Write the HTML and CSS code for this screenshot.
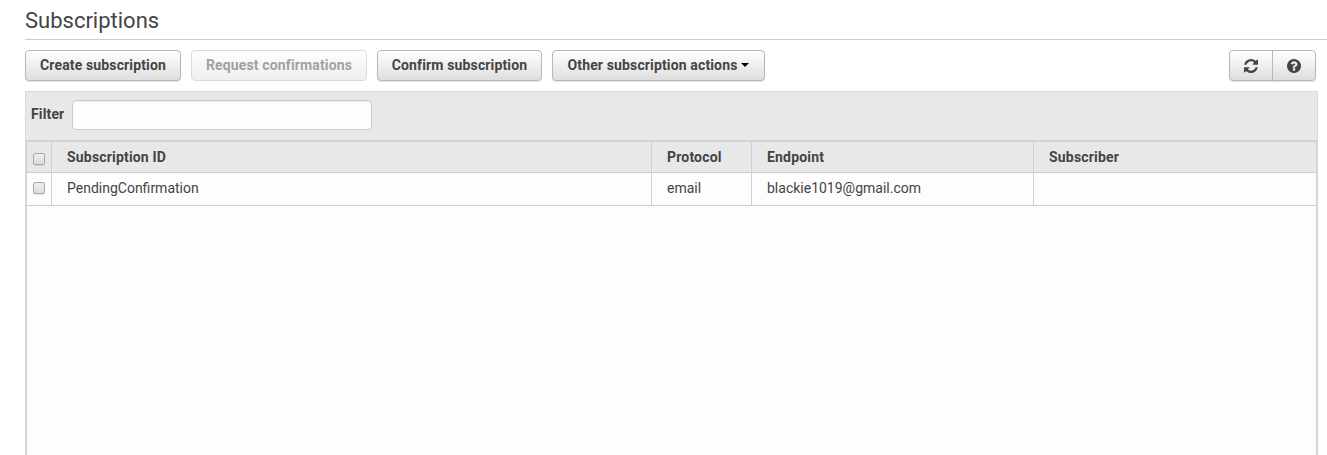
FILE: index.html
```
<!DOCTYPE html>
<html lang="en">
<head>
<meta charset="utf-8">
<title>Subscriptions</title>
<link rel="stylesheet" href="styles.css">
</head>
<body>
<main class="page">
  <h1 class="title"><span>Subscriptions</span></h1>
  <div class="toolbar">
    <button class="btn create">Create subscription</button>
    <button class="btn request" disabled>Request confirmations</button>
    <button class="btn confirm">Confirm subscription</button>
    <button class="btn other">Other subscription actions<span class="caret"></span></button>
    <div class="group">
      <button class="btn icon" aria-label="Refresh"><svg width="14" height="14" viewBox="0 0 1536 1536"><path fill="#444" d="M1511 928q0 5-1 7-64 268-268 434.500T764 1536q-146 0-282.500-55T238 1324l-129 129q-19 19-45 19t-45-19-19-45V960q0-26 19-45t45-19h448q26 0 45 19t19 45-19 45l-137 137q71 66 161 102t187 36q134 0 250-65t186-179q11-17 53-117 8-23 30-23h192q13 0 22.500 9.500t9.500 22.500zm25-800v448q0 26-19 45t-45 19h-448q-26 0-45-19t-19-45 19-45l138-138Q969 256 768 256q-134 0-250 65T332 500q-11 17-53 117-8 23-30 23H50q-13 0-22.500-9.500T18 608v-7q65-268 270-434.500T768 0q146 0 284 55.500T1297 212l130-129q19-19 45-19t45 19 19 45z"/></svg></button>
      <button class="btn icon" aria-label="Help"><svg width="14" height="14" viewBox="0 0 1536 1536"><path fill="#444" fill-rule="evenodd" d="M896 1248v-192q0-14-9-23t-23-9H672q-14 0-23 9t-9 23v192q0 14 9 23t23 9h192q14 0 23-9t9-23zm256-672q0-88-55.500-163T958 297t-170-41q-243 0-371 213-15 24 8 42l132 100q7 6 19 6 16 0 25-12 53-68 86-92 34-24 86-24 48 0 85.500 26t37.500 59q0 38-20 61t-68 45q-63 28-115.500 86.500T640 892v36q0 14 9 23t23 9h192q14 0 23-9t9-23q0-19 21.500-49.500T972 829q32-18 49-28.500t46-35 44.500-48 28-60.500 12.500-81zm384 192q0 209-103 385.500T1153.500 1433 768 1536t-385.500-103T103 1153.500 0 768t103-385.500T382.500 103 768 0t385.500 103T1433 382.500 1536 768z"/></svg></button>
    </div>
  </div>
  <section class="panel">
    <div class="filter"><label for="filter"><span>Filter</span></label><input id="filter" type="text"></div>
    <div class="grid">
      <div class="row head">
        <div class="check"><input type="checkbox"></div>
        <div>Subscription ID</div><div>Protocol</div><div>Endpoint</div><div>Subscriber</div>
      </div>
      <div class="row">
        <div class="check"><input type="checkbox"></div>
        <div><span>PendingConfirmation</span></div><div><span>email</span></div><div><span>blackie1019@gmail.com</span></div><div></div>
      </div>
    </div>
  </section>
</main>
</body>
</html>
```
FILE: styles.css
```
* { box-sizing: border-box; }
body {
  margin: 0;
  background: #fff;
  color: #444;
  font: 14px/20px Roboto, sans-serif;
  overflow: hidden;
}
.page {
  height: 455px;
  padding-left: 25px;
  display: flex;
  flex-direction: column;
}
.title {
  margin: 0;
  height: 40px;
  border-bottom: 1px solid #ccc;
  font-size: 22px;
  line-height: 42px;
  font-weight: 400;
}
.toolbar {
  display: flex;
  gap: 10px;
  padding: 10px 11px 10px 0;
  height: 51px;
}
.btn {
  height: 31px;
  padding: 0;
  border: 1px solid #b7b7b7;
  border-radius: 4px;
  background: linear-gradient(#fff, #dedede);
  box-shadow: 0 1px 1px rgba(0, 0, 0, 0.12);
  color: #444;
  font: 700 14px/29px Roboto, sans-serif;
  letter-spacing: 0.14px;
  white-space: nowrap;
}
.create { width: 156px; }
.request { width: 176px; }
.confirm { width: 165px; }
.other { width: 213px; }
.btn:disabled {
  opacity: 0.5;
  box-shadow: none;
}
.caret {
  display: inline-block;
  margin-left: 4px;
  vertical-align: 3px;
  border: 4px solid transparent;
  border-top-color: #000;
  border-bottom: 0;
}
.group { display: flex; margin-left: auto; }
.icon {
  width: 44px;
  display: flex;
  align-items: center;
  justify-content: center;
}
.icon:first-child { border-radius: 4px 0 0 4px; }
.icon:last-child { border-radius: 0 4px 4px 0; margin-left: -1px; }
.panel {
  flex: 1;
  width: 1293px;
  border: 1px solid #dadada;
  border-bottom: 0;
  background: #e8e8e8;
  display: flex;
  flex-direction: column;
}
.filter {
  height: 48px;
  padding: 8px 5px;
  display: flex;
  gap: 8px;
  font-weight: 700;
  line-height: 28px;
  letter-spacing: 0.14px;
}
.filter label { width: 33px; }
.filter input {
  width: 300px;
  height: 30px;
  border: 1px solid #ccc;
  border-radius: 4px;
  background: #fdfdfd;
  box-shadow: inset 0 1px 1px rgba(0, 0, 0, 0.075);
}
.grid {
  flex: 1;
  border-top: 2px solid #d2d2d2;
  border-right: 1px solid #d0d0d0;
  border-left: 1px solid #d0d0d0;
  background: #fdfdfd;
}
.row {
  display: grid;
  grid-template-columns: 25px 600px 100px 282px 1fr;
  height: 33px;
  border-bottom: 1px solid #ccc;
  line-height: 30px;
}
.row > div {
  border-right: 1px solid #d0d0d0;
  padding-left: 15px;
}
.row > div:last-child { border-right: 0; }
.row > .check { padding: 9px 0 0 6px; line-height: 0; }
.head {
  height: 31px;
  background: #e8e8e8;
  font-weight: 700;
  letter-spacing: 0.18px;
}
.head > .check { padding-top: 11px; }
.check input {
  appearance: none;
  display: block;
  width: 12px;
  height: 12px;
  margin: 0;
  border: 1px solid #a8a8a8;
  border-radius: 2px;
  background: linear-gradient(#efefef, #dcdcdc);
  box-shadow: 0 1px 1px rgba(0, 0, 0, 0.1);
}
```
